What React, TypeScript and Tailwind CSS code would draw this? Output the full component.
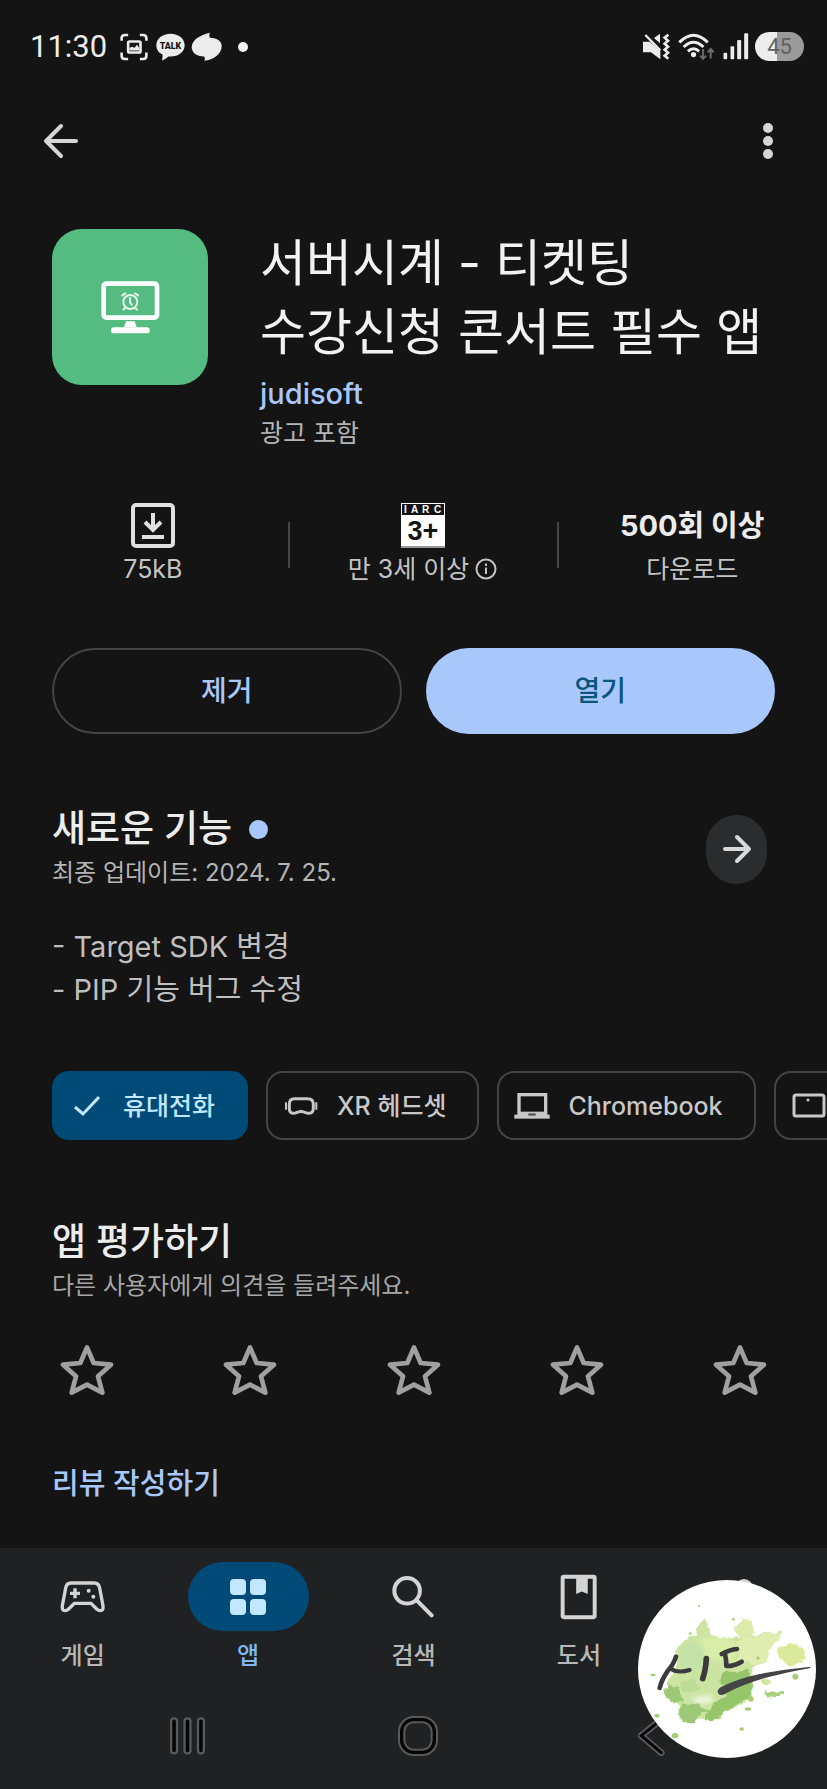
import type { ReactNode } from 'react';

function StatusBar() {
  return (
    <div className="flex h-[93px] items-center justify-between pl-[30px] pr-[23px] font-['Roboto',sans-serif] text-[#ececec]">
      <div className="flex items-center">
        <span className="w-[78px] text-[31px] leading-10">11:30</span>
        <svg className="ml-3 h-[28px] w-[28px]" viewBox="359 100 86 86" fill="none" aria-hidden="true">
          <path
            d="M364 124V116Q364 106 374 106H384M420 106H430Q440 106 440 116V124M440 160V170Q440 180 430 180H420M384 180H374Q364 180 364 170V160"
            stroke="currentColor"
            strokeWidth="8"
          />
          <rect x="384" y="126" width="38" height="34" rx="4" stroke="currentColor" strokeWidth="8" />
          <path d="M388 154V146L396 142L404 145L411 136L418 146V154Z" fill="currentColor" />
        </svg>
        <svg className="ml-2 h-[28px] w-[29px]" viewBox="467 100 88 84" aria-hidden="true">
          <path
            d="M511 102C536 102 554 117 554 137C554 157 536 171 511 171Q508 171 505 171Q495 180 485 183Q487 175 487 165C475 160 468 150 468 137C468 117 486 102 511 102Z"
            fill="currentColor"
          />
          <text x="511" y="148" textAnchor="middle" fill="#141414" fontSize="27" fontWeight="900" fontFamily="Roboto, sans-serif">
            TALK
          </text>
        </svg>
        <svg className="ml-[6px] h-[30px] w-[31px]" viewBox="571 98 94 90" aria-hidden="true">
          <path
            d="M628 100Q624 108 628 115C652 116 664 126 664 140C664 165 640 181 611 185Q615 178 611 172C586 172 573 158 573 143C575 120 598 108 628 100Z"
            fill="currentColor"
          />
        </svg>
        <span className="ml-4 h-[10px] w-[10px] rounded-full bg-[#f2f2f2]" />
      </div>
      <div className="flex items-center">
        <svg className="h-[27px] w-[28px]" viewBox="127 102 84 81" aria-hidden="true">
          <path d="M130 128H150L182 156V181L154 160H130ZM163 117L181 104V133Z" fill="currentColor" />
          <path d="M137 108L182 154" stroke="currentColor" strokeWidth="7" />
          <path
            d="M206 107L195 116L205 125L195 134L205 143L195 152L205 161L195 170L206 179"
            fill="none"
            stroke="currentColor"
            strokeWidth="8"
          />
        </svg>
        <svg className="ml-2 h-[28px] w-[37px]" viewBox="232 99 112 84" fill="none" aria-hidden="true">
          <path d="M236 127Q279 84 322 127M249 141Q279 112 309 141M262 154Q279 139 296 154" stroke="currentColor" strokeWidth="9" />
          <circle cx="279" cy="164" r="8" fill="currentColor" />
          <path d="M308 147V176M299 167L308 177L317 167M331 176V148M322 157L331 147L340 157" stroke="#6a6a6a" strokeWidth="6" />
        </svg>
        <svg className="ml-2 h-[27px] w-[26px]" viewBox="368 102 77 81" aria-hidden="true">
          <rect x="369" y="161" width="11" height="20" rx="3" fill="currentColor" />
          <rect x="390" y="142" width="11" height="39" rx="3" fill="currentColor" />
          <rect x="410" y="123" width="12" height="58" rx="3" fill="currentColor" />
          <rect x="431" y="103" width="12" height="78" rx="3" fill="currentColor" />
        </svg>
        <span className="ml-[6px] flex h-[29px] w-[49px] items-center justify-center rounded-full bg-linear-to-r from-[#ededed] from-45% to-[#9a9a9a] to-45% text-[22px] leading-[29px] text-[#606060]">
          45
        </span>
      </div>
    </div>
  );
}

function AppBar() {
  return (
    <header className="flex h-[96px] items-center justify-between pl-[42px] pr-[43px] text-[#d6d6d6]">
      <button type="button" aria-label="뒤로" className="flex">
        <svg className="h-[38px] w-[38px]" viewBox="0 0 38 38" fill="none" stroke="currentColor" strokeWidth="4" strokeLinecap="round" strokeLinejoin="round">
          <path d="M34 19H5M19 4L4 19L19 34" />
        </svg>
      </button>
      <button type="button" aria-label="옵션 더보기" className="flex w-8 justify-center">
        <svg className="h-[38px] w-3" viewBox="0 0 12 38" fill="currentColor">
          <circle cx="6" cy="6" r="5" />
          <circle cx="6" cy="19" r="5" />
          <circle cx="6" cy="32" r="5" />
        </svg>
      </button>
    </header>
  );
}

function AppIcon() {
  return (
    <div className="flex h-[156px] w-[156px] shrink-0 items-center justify-center rounded-[30px] bg-[#54bc80]">
      <svg className="h-[54px] w-[60px]" viewBox="210 210 180 162" fill="none" aria-hidden="true">
        <rect x="221" y="221" width="160" height="102" rx="8" stroke="#fff" strokeWidth="14" />
        <path d="M288 334H314L320 352H282Z" fill="#fff" />
        <rect x="243" y="352" width="116" height="18" rx="8" fill="#fff" />
        <g stroke="#e6f6ec" strokeWidth="6" strokeLinecap="round">
          <circle cx="301" cy="276" r="21" />
          <path d="M300 264V277L305 284M277 256L286 250M324 256L315 250M285 294L280 299M316 294L321 299" />
        </g>
      </svg>
    </div>
  );
}

function AppHeader() {
  return (
    <section className="flex gap-[52px] px-[52px] pt-[40px]">
      <AppIcon />
      <div className="min-w-0 flex-1">
        <h1 className="text-[50px] leading-[69px] text-[#f2f2f2]">
          서버시계 - 티켓팅
          <br />
          <span className="whitespace-nowrap">수강신청 콘서트 필수 앱</span>
        </h1>
        <a href="#developer" className="mt-2 block text-[29px] font-medium leading-[38px] text-[#a8c7fa]">
          judisoft
        </a>
        <p className="text-[25px] leading-10 text-[#b4b4b4]">광고 포함</p>
      </div>
    </section>
  );
}

function Stats() {
  return (
    <section className="mt-[50px] flex pl-[18px] text-[25px] leading-[42px] text-[#c4c4c4]">
      <div className="flex flex-1 flex-col items-center">
        <svg className="h-[45px] w-[44px]" viewBox="0 0 44 45" fill="none" stroke="#e0e0e0" strokeWidth="4" aria-hidden="true">
          <rect x="2" y="2" width="40" height="41" rx="3" />
          <path d="M22 10V26M14 19L22 27L30 19M11 34H33" />
        </svg>
        <span>75kB</span>
      </div>
      <div className="relative flex flex-1 flex-col items-center">
        <span className="absolute left-0 top-[19px] h-[46px] w-[2px] bg-[#444746]" />
        <svg className="h-[45px] w-[44px]" viewBox="0 0 44 45" fontFamily="'Liberation Sans', Arial, sans-serif" fontWeight="700">
          <rect x="0" y="0" width="44" height="45" fill="#fff" />
          <rect x="1" y="1" width="42" height="11" fill="#141414" />
          <text x="3" y="10" fontSize="10" fill="#fff">I</text>
          <text x="10" y="10" fontSize="10" fill="#fff">A</text>
          <text x="21" y="10" fontSize="10" fill="#fff">R</text>
          <text x="33" y="10" fontSize="10" fill="#fff">C</text>
          <text x="22" y="37" fontSize="27" fill="#141414" textAnchor="middle">3+</text>
          <rect x="0" y="43" width="44" height="2" fill="#9a9a9a" />
        </svg>
        <a href="#rating" className="flex items-center gap-[6px] whitespace-nowrap">
          만 3세 이상
          <svg className="h-[22px] w-[22px]" viewBox="0 0 22 22" fill="none" stroke="currentColor" strokeWidth="2" aria-hidden="true">
            <circle cx="11" cy="11" r="9.5" />
            <path d="M11 9.5V16M11 5.5V8" />
          </svg>
        </a>
      </div>
      <div className="relative flex flex-1 flex-col items-center">
        <span className="absolute left-0 top-[19px] h-[46px] w-[2px] bg-[#444746]" />
        <strong className="whitespace-nowrap text-[29px] font-bold leading-[45px] text-[#ececec]">500회 이상</strong>
        <span>다운로드</span>
      </div>
    </section>
  );
}

function Actions() {
  return (
    <section className="mt-[58px] grid grid-cols-2 gap-6 px-[52px] text-[28px] font-medium">
      <button type="button" className="h-[86px] rounded-full border-2 border-[#444444] text-[#a8c7fa]">
        제거
      </button>
      <button type="button" className="h-[86px] rounded-full bg-[#a8c8fb] text-[#0b557c]">
        열기
      </button>
    </section>
  );
}

function WhatsNew() {
  return (
    <section className="mt-[71px] pl-[52px] pr-[60px]">
      <div className="flex items-center justify-between">
        <div>
          <h2 className="flex items-center gap-[17px] text-[37px] font-medium leading-[48px] text-[#ececec]">
            새로운 기능
            <span className="h-[19px] w-[19px] rounded-full bg-[#a8c7fa]" />
          </h2>
          <p className="text-[24px] leading-10 text-[#b4b4b4]">최종 업데이트: 2024. 7. 25.</p>
        </div>
        <button type="button" aria-label="새로운 기능 더보기" className="flex h-[69px] w-[61px] items-center justify-center rounded-full bg-[#2b2c2d] text-[#d8d8d8]">
          <svg className="h-[30px] w-[30px]" viewBox="0 0 30 30" fill="none" stroke="currentColor" strokeWidth="4" strokeLinecap="round" strokeLinejoin="round">
            <path d="M3 15H26M15 3L27 15L15 27" />
          </svg>
        </button>
      </div>
      <p className="mt-8 text-[29px] leading-[43px] text-[#bfbfbf]">
        - Target SDK 변경
        <br />- PIP 기능 버그 수정
      </p>
    </section>
  );
}

function Chip({ icon, label, children, selected = false }: { icon: ReactNode; label: string; children?: ReactNode; selected?: boolean }) {
  return (
    <button
      type="button"
      aria-pressed={selected}
      aria-label={label}
      className={
        selected
          ? 'flex h-[69px] shrink-0 items-center gap-[18px] rounded-[17px] border-2 border-[#004a77] bg-[#004a77] pl-[15px] pr-[31px] text-[#c2e7ff]'
          : 'flex h-[69px] shrink-0 items-center gap-[18px] rounded-[17px] border-2 border-[#444444] pl-[15px] pr-[31px] text-[#c8c8c8]'
      }
    >
      <span className="flex w-9 justify-center">{icon}</span>
      {children && <span className="whitespace-nowrap text-[25px] font-medium leading-10">{children}</span>}
    </button>
  );
}

function DeviceChips() {
  return (
    <section className="mt-[60px] flex gap-[18px] overflow-hidden pl-[52px]">
      <Chip
        selected
        label="휴대전화"
        icon={
          <svg className="h-[22px] w-[26px]" viewBox="0 0 26 22" fill="none" stroke="currentColor" strokeWidth="3">
            <path d="M1 12L9 19L25 2" />
          </svg>
        }
      >
        휴대전화
      </Chip>
      <Chip
        label="XR 헤드셋"
        icon={
          <svg className="h-[20px] w-[34px]" viewBox="760 138 102 60" fill="none" stroke="currentColor" strokeWidth="9">
            <path d="M791 146H831Q848 146 848 163V175Q848 190 835 190Q829 190 823 187L811 184L799 187Q793 190 787 190Q776 190 776 175V163Q776 146 791 146Z" />
            <path d="M766 157V179M857 157V179" strokeWidth="6" />
          </svg>
        }
      >
        XR 헤드셋
      </Chip>
      <Chip
        label="Chromebook"
        icon={
          <svg className="h-[26px] w-[36px]" viewBox="248 126 108 78" fill="none">
            <rect x="263" y="131" width="80" height="60" stroke="currentColor" strokeWidth="10" />
            <rect x="249" y="191" width="106" height="12" fill="currentColor" />
            <rect x="260" y="182" width="86" height="12" fill="currentColor" />
            <rect x="291" y="187" width="22" height="7" fill="#555" />
          </svg>
        }
      >
        Chromebook
      </Chip>
      <Chip
        label="태블릿"
        icon={
          <svg className="h-[25px] w-[34px]" viewBox="0 0 34 25" fill="none">
            <rect x="2" y="2" width="30" height="21" rx="2" stroke="currentColor" strokeWidth="3" />
            <circle cx="16" cy="7" r="1.5" fill="currentColor" />
          </svg>
        }
      />
    </section>
  );
}

function RateApp() {
  return (
    <section className="mt-[78px] px-[52px]">
      <h2 className="text-[37px] font-medium leading-[48px] text-[#ececec]">앱 평가하기</h2>
      <p className="text-[24px] leading-10 text-[#a6a6a6]">다른 사용자에게 의견을 들려주세요.</p>
      <div className="mt-[29px] flex justify-between text-[#a0a0a0]">
        {[1, 2, 3, 4, 5].map((n) => (
          <button key={n} type="button" aria-label={`별표 ${n}개`} className="flex h-[70px] w-[70px] items-center justify-center">
            <svg className="h-[52px] w-[54px]" viewBox="90 431 162 156" fill="none" stroke="currentColor" strokeWidth="14" strokeLinejoin="round">
              <path d="M171 441L191 488L243 493L204 528L217 577L171 553L125 577L138 528L99 493L151 488Z" />
            </svg>
          </button>
        ))}
      </div>
      <a href="#review" className="mt-[59px] block text-[29px] font-medium leading-10 text-[#a8c7fa]">
        리뷰 작성하기
      </a>
    </section>
  );
}

function Tab({ icon, label, active = false }: { icon: ReactNode; label: string; active?: boolean }) {
  return (
    <a href="#tab" className="flex flex-1 flex-col items-center gap-[5px]">
      <span
        className={
          active
            ? 'flex h-[69px] w-[121px] items-center justify-center rounded-full bg-[#004a77] text-[#c2e7ff]'
            : 'flex h-[69px] w-[121px] items-center justify-center text-[#d4d4d4]'
        }
      >
        {icon}
      </span>
      <span className={active ? 'text-[24px] font-medium leading-10 text-[#7fb8f0]' : 'text-[24px] font-medium leading-10 text-[#b8b8b8]'}>
        {label}
      </span>
    </a>
  );
}

function BottomBar() {
  return (
    <footer className="mt-[44px] bg-[#202122] pb-[33px] pt-[14px]">
      <nav className="flex">
        <Tab
          label="게임"
          icon={
            <svg className="h-[33px] w-[46px]" viewBox="182 148 138 99" fill="none" stroke="currentColor" strokeWidth="10">
              <path d="M215 157H285Q298 157 301 172L311 225Q313 240 303 240Q297 240 292 235L275 218H225L208 235Q203 240 197 240Q187 240 189 225L199 172Q202 157 215 157Z" />
              <path d="M212 188H242M227 173V203" />
              <circle cx="268" cy="180" r="6" fill="currentColor" stroke="none" />
              <circle cx="282" cy="198" r="6" fill="currentColor" stroke="none" />
            </svg>
          }
        />
        <Tab
          active
          label="앱"
          icon={
            <svg className="h-[36px] w-[36px]" viewBox="0 0 36 36" fill="currentColor">
              <rect x="0" y="0" width="16" height="16" rx="4" />
              <rect x="20" y="0" width="16" height="16" rx="4" />
              <rect x="0" y="20" width="16" height="16" rx="4" />
              <rect x="20" y="20" width="16" height="16" rx="4" />
            </svg>
          }
        />
        <Tab
          label="검색"
          icon={
            <svg className="h-[43px] w-[43px]" viewBox="-20 136 128 128" fill="none" stroke="currentColor" strokeWidth="12" strokeLinecap="round">
              <circle cx="25" cy="183" r="38" />
              <path d="M53 211L98 256" />
            </svg>
          }
        />
        <Tab
          label="도서"
          icon={
            <svg className="h-[46px] w-[37px]" viewBox="482 130 112 138" fill="none">
              <rect x="490" y="138" width="97" height="122" rx="4" stroke="currentColor" strokeWidth="12" />
              <path d="M531 140H566V190L548 182L531 190Z" fill="currentColor" />
            </svg>
          }
        />
        <Tab
          label=""
          icon={
            <svg className="h-[38px] w-[38px]" viewBox="0 0 38 38" fill="currentColor">
              <circle cx="19" cy="10" r="9" />
              <path d="M3 36Q3 22 19 22Q35 22 35 36Z" />
            </svg>
          }
        />
      </nav>
      <div className="mt-[40px] flex justify-center gap-48 pl-4">
        <button type="button" aria-label="최근 앱" className="flex h-10 w-[37px] items-center">
          <svg className="h-[38px] w-[37px]" viewBox="507 561 110 116" fill="#050505" stroke="#5a5a5a" strokeWidth="7">
            <rect x="512" y="565" width="18" height="107" rx="9" />
            <rect x="553" y="565" width="18" height="107" rx="9" />
            <rect x="594" y="565" width="18" height="107" rx="9" />
          </svg>
        </button>
        <button type="button" aria-label="홈" className="flex">
          <svg className="h-[40px] w-[40px]" viewBox="-4 558 120 120" fill="none">
            <rect x="7" y="569" width="98" height="98" rx="36" stroke="#5a5a5a" strokeWidth="22" />
            <rect x="7" y="569" width="98" height="98" rx="36" stroke="#050505" strokeWidth="10" />
          </svg>
        </button>
        <button type="button" aria-label="뒤로 가기" className="flex w-11 justify-center">
          <svg className="h-[40px] w-[28px]" viewBox="712 558 84 120" fill="none" strokeLinecap="round">
            <path d="M782 568L722 617L782 668" stroke="#5a5a5a" strokeWidth="20" />
            <path d="M782 568L722 617L782 668" stroke="#050505" strokeWidth="9" />
          </svg>
        </button>
      </div>
    </footer>
  );
}

function FloatingBadge() {
  return (
    <div className="absolute bottom-[31px] right-[11px] h-[178px] w-[178px] overflow-hidden rounded-full bg-white">
      <svg className="h-full w-full" viewBox="715 152 534 532" role="img" aria-label="시드">
        <defs>
          <filter id="ragged" x="-10%" y="-10%" width="120%" height="120%">
            <feTurbulence type="fractalNoise" baseFrequency="0.035" numOctaves="3" seed="4" />
            <feDisplacementMap in="SourceGraphic" scale="24" xChannelSelector="R" yChannelSelector="G" />
          </filter>
          <filter id="wash">
            <feGaussianBlur stdDeviation="7" />
          </filter>
        </defs>
        <g filter="url(#ragged)">
          <path d="M893 318L900 285L911 262L922 288L930 318L990 325L1040 318L1145 306L1140 332L1108 366L1105 395L1065 410L1055 435L1062 470L1050 505L1010 535L970 550L960 572L925 572L895 564L885 582L848 580L834 556L838 528L808 512L792 480L812 440L834 400L829 365L860 328Z" fill="#cbe4a2" />
          <path d="M1010 330L1145 306L1138 335L1108 366L1104 395L1060 405L1020 395Z" fill="#e0edb0" />
          <ellipse cx="1172" cy="374" rx="42" ry="33" fill="#dbe99a" />
          <circle cx="1036" cy="298" r="27" fill="#dcebaa" />
          <ellipse cx="1098" cy="455" rx="15" ry="12" fill="#d3e59c" />
          <path d="M1095 478L1112 488L1150 484L1154 496L1128 506L1104 502Z" fill="#a9d07e" />
        </g>
        <g filter="url(#wash)">
          <path d="M900 325L985 325L1015 350L1005 400L930 390L880 345Z" fill="#d9eda6" />
          <path d="M845 350L900 335L920 380L880 430L840 410Z" fill="#c2e2a8" />
          <path d="M870 505L930 495L945 515L900 525Z" fill="#eaf5d8" />
        </g>
        <g filter="url(#ragged)">
          <path d="M970 428L1045 420L1060 470L1045 502L1005 532L968 550L955 570L915 572L935 525L985 490L965 460Z" fill="#96c56a" />
          <path d="M800 460L838 480L850 518L815 518L796 490ZM842 522L890 525L930 540L895 560L885 580L850 580L836 555Z" fill="#9bc977" />
          <ellipse cx="870" cy="470" rx="30" ry="18" fill="#bcdc98" />
        </g>
        <g fill="#a6cd72">
          <circle cx="1187" cy="441" r="9" />
          <ellipse cx="772" cy="558" rx="8" ry="6" />
          <ellipse cx="826" cy="618" rx="10" ry="8" />
          <ellipse cx="760" cy="436" rx="8" ry="4" />
          <ellipse cx="1026" cy="598" rx="7" ry="5" />
          <ellipse cx="1045" cy="538" rx="10" ry="5" />
          <circle cx="1075" cy="385" r="5" />
          <circle cx="1001" cy="269" r="4" />
          <circle cx="1054" cy="508" r="8" />
          <circle cx="872" cy="312" r="4" />
          <circle cx="898" cy="229" r="3" />
        </g>
        <g fill="none" stroke="#3b3b3e" strokeLinecap="round" strokeLinejoin="round">
          <path d="M829 381Q822 404 804 424Q786 450 780 475" strokeWidth="14" />
          <path d="M812 416Q832 432 870 421" strokeWidth="12" />
          <path d="M920 387Q918 422 909 447" strokeWidth="17" />
          <path d="M966 373Q990 360 1012 358M976 373Q980 390 980 409Q1002 410 1026 396" strokeWidth="14" />
        </g>
        <path d="M1232 411Q1160 418 1080 433Q1015 447 964 472Q948 482 957 493Q966 500 982 489Q1040 460 1110 441Q1170 426 1232 415Z" fill="#444447" />
      </svg>
    </div>
  );
}

export default function App() {
  return (
    <div
      lang="ko"
      className="relative min-h-screen overflow-hidden bg-[#141414] font-['Inter','Noto_Sans_CJK_KR',sans-serif]"
    >
      <StatusBar />
      <AppBar />
      <main>
        <AppHeader />
        <Stats />
        <Actions />
        <WhatsNew />
        <DeviceChips />
        <RateApp />
      </main>
      <BottomBar />
      <FloatingBadge />
    </div>
  );
}
